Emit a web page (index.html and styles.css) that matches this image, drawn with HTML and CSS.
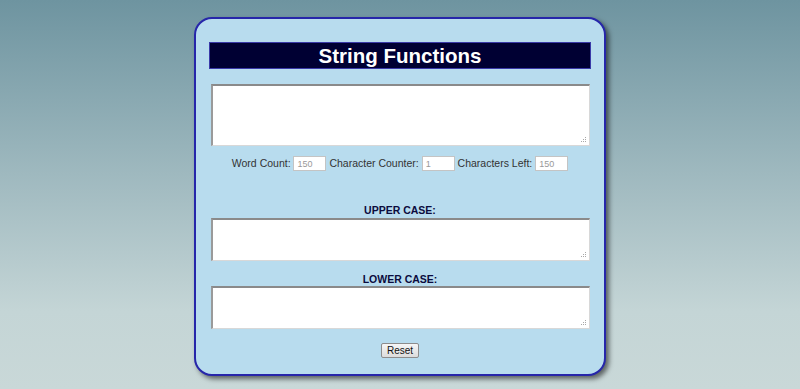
FILE: index.html
```html
<!DOCTYPE html>
<html>
<head>
    <title>String Functions</title>
    <link rel="stylesheet" href="styles.css">
</head>
<body>
    <div class="panel">
        <h1 class="title">String Functions</h1>

        <textarea class="inputText" id="inputText"></textarea>

        <div class="counters">
            Word Count: <input type="text" class="counter" value="150">
            Character Counter: <input type="text" class="counter" value="1">
            Characters Left: <input type="text" class="counter" value="150">
        </div>

        <div class="caseLabel first">UPPER CASE:</div>
        <textarea class="caseText" id="upperText"></textarea>

        <div class="caseLabel">LOWER CASE:</div>
        <textarea class="caseText" id="lowerText"></textarea>

        <div class="actions">
            <button class="resetBtn" type="button">Reset</button>
        </div>
    </div>
</body>
</html>
```

FILE: styles.css
```css
html, body{
    margin: 0;
    height: 100%;
}
body{
    background: linear-gradient(to bottom, #6e94a0 0%, #9fb9bf 45%, #c4d5d6 80%, #c9d8d8 100%);
    font-family: "Liberation Sans", Arial, sans-serif;
}
.panel{
    width: 382px;
    margin: 17px auto 0;
    padding: 23px 13px 16px;
    background: #b8dcee;
    border: 2px solid #2626aa;
    border-radius: 18px;
    box-shadow: 3px 3px 5px rgba(0, 0, 0, 0.55);
}
.title{
    margin: 0;
    height: 27px;
    box-sizing: border-box;
    background: #000033;
    border: 1px solid #3a3aa8;
    color: #ffffff;
    font-size: 20.5px;
    font-weight: bold;
    line-height: 25px;
    text-align: center;
}
textarea{
    display: block;
    width: 379px;
    margin: 0 auto;
    box-sizing: border-box;
    background-color: #ffffff;
    /* dotted grip in the corner */
    background-image: url("data:image/svg+xml,%3Csvg xmlns='http://www.w3.org/2000/svg' width='6' height='6'%3E%3Crect x='4' y='0' width='1' height='1' fill='%23a8a8a8'/%3E%3Crect x='2' y='2' width='1' height='1' fill='%23a8a8a8'/%3E%3Crect x='4' y='2' width='1' height='1' fill='%23a8a8a8'/%3E%3Crect x='0' y='4' width='1' height='1' fill='%23a8a8a8'/%3E%3Crect x='2' y='4' width='1' height='1' fill='%23a8a8a8'/%3E%3Crect x='4' y='4' width='1' height='1' fill='%23a8a8a8'/%3E%3C/svg%3E");
    background-repeat: no-repeat;
    background-position: right 2px bottom 2px;
    border-top: 2px solid #8a8a8a;
    border-left: 2px solid #9a9a9a;
    border-right: 1px solid #d8d8d8;
    border-bottom: 1px solid #d8d8d8;
    outline: none;
    resize: none;
}
.inputText{
    margin-top: 15px;
    height: 62px;
}
.counters{
    margin-top: 10px;
    height: 15px;
    font-size: 10.5px;
    line-height: 15px;
    color: #333333;
    text-align: center;
}
.counter{
    width: 33px;
    height: 15px;
    box-sizing: border-box;
    padding: 0 3px;
    border: 1px solid #c4c4c4;
    font-family: "Liberation Sans", Arial, sans-serif;
    font-size: 9px;
    color: #999999;
    vertical-align: top;
}
.caseLabel{
    margin-top: 11px;
    margin-bottom: 0;
    font-size: 10.5px;
    font-weight: bold;
    line-height: 14px;
    color: #0b0b3d;
    text-align: center;
}
.caseLabel.first{
    margin-top: 32px;
    margin-bottom: 1px;
}
.caseText{
    height: 43px;
}
.actions{
    margin-top: 11px;
    text-align: center;
}
.resetBtn{
    height: 15px;
    padding: 0 5px;
    border: 1px solid #8c8c8c;
    border-radius: 2px;
    background: linear-gradient(to bottom, #f6f6f6, #dcdcdc);
    font-family: "Liberation Sans", Arial, sans-serif;
    font-size: 10px;
    line-height: 13px;
    color: #111111;
}
```
